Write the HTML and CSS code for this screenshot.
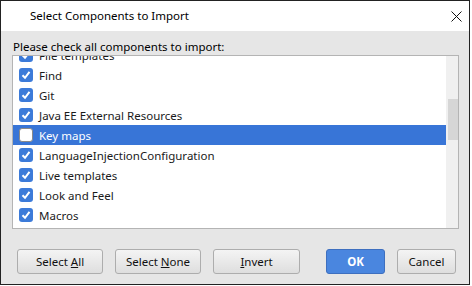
FILE: index.html
```html
<!DOCTYPE html>
<html>
<head>
<meta charset="utf-8">
<link rel="stylesheet" href="styles.css">
</head>
<body>
<div class="window">
  <div class="titlebar">
    <span class="title">Select Components to Import</span>
    <svg class="close" width="11" height="11" viewBox="0 0 11 11"><path d="M0.5 0.5 L10.5 10.5 M10.5 0.5 L0.5 10.5" stroke="#111" stroke-width="1" fill="none"/></svg>
  </div>
  <div class="content">
    <div class="label">Please check all components to import:</div>
    <div class="listbox">
      <div class="rows">
        <div class="row"><span class="cb on"><svg viewBox="0 0 14 14"><path d="M3.5 7.2 L6 9.8 L10.5 3.8" stroke="#fff" stroke-width="2" fill="none"/></svg></span><span>File templates</span></div>
        <div class="row"><span class="cb on"><svg viewBox="0 0 14 14"><path d="M3.5 7.2 L6 9.8 L10.5 3.8" stroke="#fff" stroke-width="2" fill="none"/></svg></span><span>Find</span></div>
        <div class="row"><span class="cb on"><svg viewBox="0 0 14 14"><path d="M3.5 7.2 L6 9.8 L10.5 3.8" stroke="#fff" stroke-width="2" fill="none"/></svg></span><span>Git</span></div>
        <div class="row"><span class="cb on"><svg viewBox="0 0 14 14"><path d="M3.5 7.2 L6 9.8 L10.5 3.8" stroke="#fff" stroke-width="2" fill="none"/></svg></span><span>Java EE External Resources</span></div>
        <div class="row selected"><span class="cb off"></span><span>Key maps</span></div>
        <div class="row"><span class="cb on"><svg viewBox="0 0 14 14"><path d="M3.5 7.2 L6 9.8 L10.5 3.8" stroke="#fff" stroke-width="2" fill="none"/></svg></span><span>LanguageInjectionConfiguration</span></div>
        <div class="row"><span class="cb on"><svg viewBox="0 0 14 14"><path d="M3.5 7.2 L6 9.8 L10.5 3.8" stroke="#fff" stroke-width="2" fill="none"/></svg></span><span>Live templates</span></div>
        <div class="row"><span class="cb on"><svg viewBox="0 0 14 14"><path d="M3.5 7.2 L6 9.8 L10.5 3.8" stroke="#fff" stroke-width="2" fill="none"/></svg></span><span>Look and Feel</span></div>
        <div class="row"><span class="cb on"><svg viewBox="0 0 14 14"><path d="M3.5 7.2 L6 9.8 L10.5 3.8" stroke="#fff" stroke-width="2" fill="none"/></svg></span><span>Macros</span></div>
      </div>
      <div class="scrollbar"><div class="thumb"></div></div>
    </div>
    <div class="buttons">
      <button class="btn w86">Select <u>A</u>ll</button>
      <button class="btn w86">Select <u>N</u>one</button>
      <button class="btn w87"><u>I</u>nvert</button>
      <button class="btn primary w59 push">OK</button>
      <button class="btn w59">Cancel</button>
    </div>
  </div>
</div>
</body>
</html>
```

FILE: styles.css
```css
html, body {
  margin: 0;
  padding: 0;
  background: #ffffff;
}
body {
  font-family: "Noto Sans", "Open Sans", "DejaVu Sans", sans-serif;
  font-size: 11.5px;
  color: #1a1a1a;
}
.window {
  width: 468px;
  height: 283px;
  border: 1px solid #222;
  display: flex;
  flex-direction: column;
  background: #e6e6e6;
}
.titlebar {
  height: 30px;
  background: #ffffff;
  display: flex;
  align-items: center;
  padding-left: 29px;
  padding-right: 7px;
  flex: none;
}
.title {
  flex: 1;
  font-size: 11.5px;
  color: #000;
  position: relative;
  top: -1px;
}
.close {
  display: block;
}
.content {
  flex: 1;
  display: flex;
  flex-direction: column;
  padding: 8px 10px 0 11px;
}
.label {
  line-height: 16px;
  height: 16px;
  padding-left: 1px;
  color: #000;
}
.listbox {
  height: 174px;
  box-sizing: border-box;
  border: 1px solid #b4b4b4;
  background: #fff;
  display: flex;
  overflow: hidden;
}
.rows {
  flex: 1;
  margin-top: -11px;
}
.row {
  height: 20px;
  display: flex;
  align-items: center;
  padding-left: 6px;
  gap: 6px;
  color: #1a1a1a;
}
.row.selected {
  background: #3875d7;
  color: #fff;
}
.cb {
  width: 14px;
  height: 14px;
  box-sizing: border-box;
  border-radius: 3px;
  flex: none;
}
.cb svg {
  display: block;
  width: 14px;
  height: 14px;
}
.cb.on {
  background: #3c7bd9;
}
.cb.off {
  background: #fff;
  border: 1px solid #8a8a8a;
}
.scrollbar {
  width: 12px;
  background: #f0f0f0;
  padding-top: 43px;
  box-sizing: border-box;
  display: flex;
  justify-content: flex-end;
}
.thumb {
  width: 10px;
  height: 41px;
  background: #d6d6d6;
}
.buttons {
  display: flex;
  gap: 12px;
  margin-top: 20px;
  padding-left: 5px;
  padding-right: 3px;
}
.btn {
  height: 25px;
  box-sizing: border-box;
  border: 1px solid #adadad;
  border-radius: 3px;
  background: linear-gradient(#f4f4f4, #dedede);
  font-family: inherit;
  font-size: 11.5px;
  color: #111;
  padding: 0;
}
.btn u {
  text-decoration: underline;
}
.w86 { width: 86px; }
.w87 { width: 87px; }
.w59 { width: 59px; }
.push { margin-left: auto; }
.btn.primary {
  background: #4a86df;
  border-color: #3e6fbf;
  color: #fff;
  font-weight: bold;
}
```
